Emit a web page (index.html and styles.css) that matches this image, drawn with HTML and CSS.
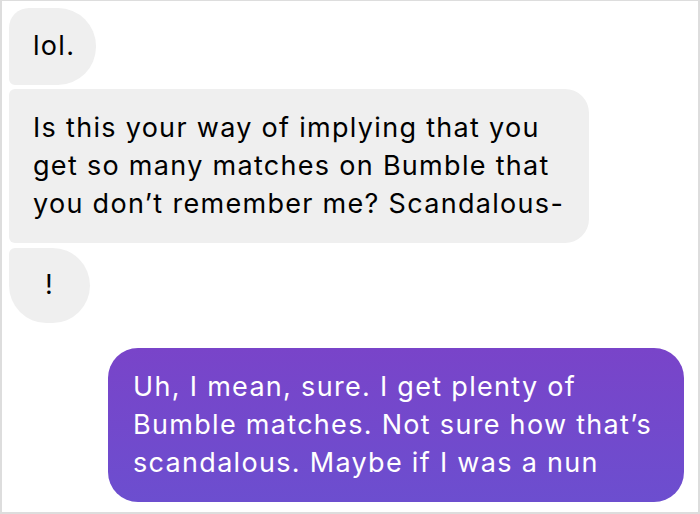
FILE: index.html
```html
<!DOCTYPE html>
<html>
<head>
<meta charset="utf-8">
<link rel="stylesheet" href="styles.css">
</head>
<body>
<div class="frame">
  <div class="group theirs">
    <div class="bubble b-first">lol.</div>
    <div class="bubble b-mid">Is this your way of implying that you<br>get so many matches on Bumble that<br>you don’t remember me? Scandalous-</div>
    <div class="bubble b-last">!</div>
  </div>
  <div class="group mine">
    <div class="bubble b-mine">Uh, I mean, sure. I get plenty of<br>Bumble matches. Not sure how that’s<br>scandalous. Maybe if I was a nun</div>
  </div>
</div>
</body>
</html>
```

FILE: styles.css
```css
html, body {
  margin: 0;
  padding: 0;
  background: #ffffff;
}
.frame {
  width: 700px;
  height: 514px;
  box-sizing: border-box;
  border-style: solid;
  border-color: #dddddd;
  border-width: 1px 2px 2px 2px;
  padding: 7px 14px 0 7px;
  display: flex;
  flex-direction: column;
  gap: 25px;
  font-family: "Inter", "Roboto", "Liberation Sans", sans-serif;
  font-size: 27px;
  letter-spacing: 1.3px;
  line-height: 38px;
}
.group {
  display: flex;
  flex-direction: column;
  gap: 4px;
}
.theirs { align-items: flex-start; }
.mine { align-items: flex-end; }
.bubble {
  width: fit-content;
  white-space: nowrap;
  background: #efefef;
  color: #000;
  padding: 19px 25px 20px 24px;
}
.b-first {
  border-radius: 20px 38px 38px 6px;
  padding-right: 21px;
}
.b-mid {
  border-radius: 6px 24px 24px 6px;
  padding-top: 20px;
  padding-bottom: 20px;
}
.b-last {
  margin-top: 1px;
  width: 33px;
  text-align: center;
  border-radius: 6px 38px 38px 38px;
  padding: 18px 24px 19px 24px;
}
.b-mine {
  background: linear-gradient(180deg, #7944c9 0%, #6c4ecf 100%);
  color: #ffffff;
  border-radius: 30px;
  padding: 20px 32px 20px 25px;
}
```
